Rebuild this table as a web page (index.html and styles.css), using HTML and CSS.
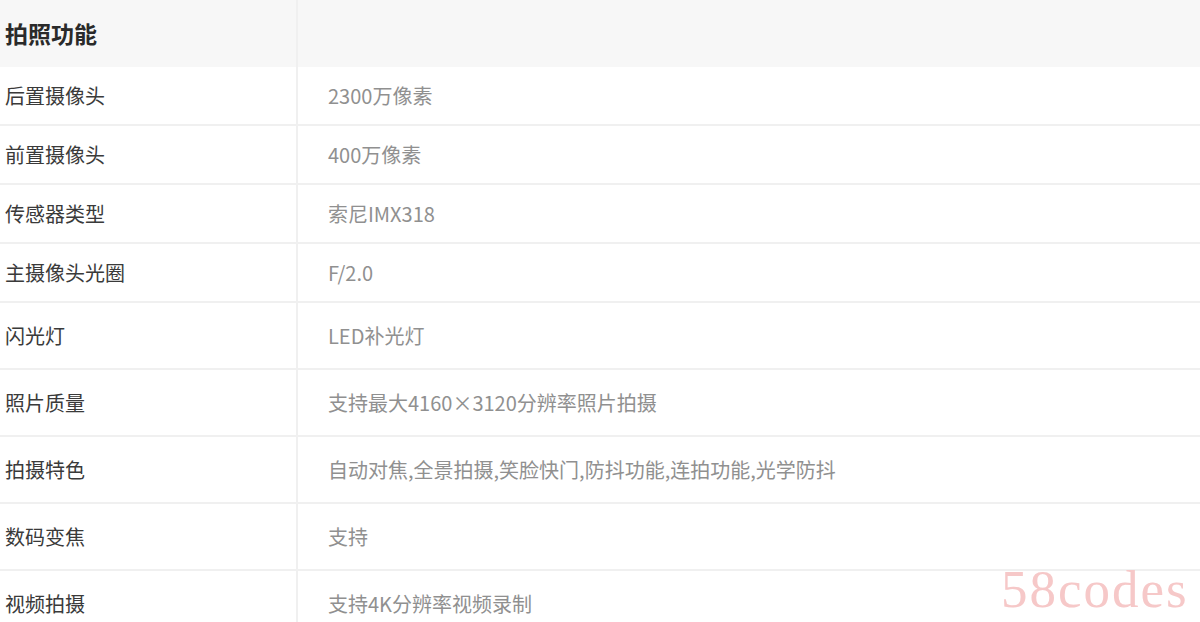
FILE: index.html
```html
<!DOCTYPE html>
<html lang="zh-CN">
<head>
<meta charset="utf-8">
<link rel="stylesheet" href="styles.css">
</head>
<body>
<div class="spec">
  <div class="row head"><div class="key">拍照功能</div><div class="val"></div></div>
  <div class="row short"><div class="key">后置摄像头</div><div class="val">2300万像素</div></div>
  <div class="row short"><div class="key">前置摄像头</div><div class="val">400万像素</div></div>
  <div class="row short"><div class="key">传感器类型</div><div class="val">索尼IMX318</div></div>
  <div class="row short"><div class="key">主摄像头光圈</div><div class="val">F/2.0</div></div>
  <div class="row tall"><div class="key">闪光灯</div><div class="val">LED补光灯</div></div>
  <div class="row tall"><div class="key">照片质量</div><div class="val">支持最大4160×3120分辨率照片拍摄</div></div>
  <div class="row tall"><div class="key">拍摄特色</div><div class="val">自动对焦,全景拍摄,笑脸快门,防抖功能,连拍功能,光学防抖</div></div>
  <div class="row tall"><div class="key">数码变焦</div><div class="val">支持</div></div>
  <div class="row tall"><div class="key">视频拍摄</div><div class="val">支持4K分辨率视频录制</div></div>
</div>
<div class="mark">58codes</div>
</body>
</html>
```
FILE: styles.css
```css
html, body {
  margin: 0;
  padding: 0;
  background: #fff;
  overflow: hidden;
}
body {
  font-family: "Noto Sans CJK SC", "Noto Sans", sans-serif;
  width: 1200px;
  height: 622px;
  position: relative;
}
.spec {
  display: flex;
  flex-direction: column;
}
.row {
  display: flex;
  align-items: stretch;
  border-bottom: 2px solid #f0f0f0;
  box-sizing: border-box;
}
.row.head {
  height: 67px;
  background: #f7f7f7;
  border-bottom: none;
}
.row.short { height: 59px; }
.row.tall { height: 67px; }
.key {
  width: 298px;
  flex: none;
  box-sizing: border-box;
  padding-left: 5px;
  display: flex;
  align-items: center;
  font-size: 20px;
  color: #3a3a3a;
  border-right: 2px solid #f0f0f0;
}
.head .key {
  font-size: 23px;
  font-weight: bold;
  color: #2a2a2a;
  padding-bottom: 2px;
}
.val {
  flex: 1;
  display: flex;
  align-items: center;
  padding-left: 30px;
  font-size: 20px;
  color: #909090;
}
.mark {
  position: absolute;
  left: 1001px;
  top: 559px;
  font-family: "Liberation Serif", "DejaVu Serif", serif;
  font-size: 53px;
  line-height: 1.15;
  color: #f6c8c8;
  letter-spacing: 2px;
}
```
